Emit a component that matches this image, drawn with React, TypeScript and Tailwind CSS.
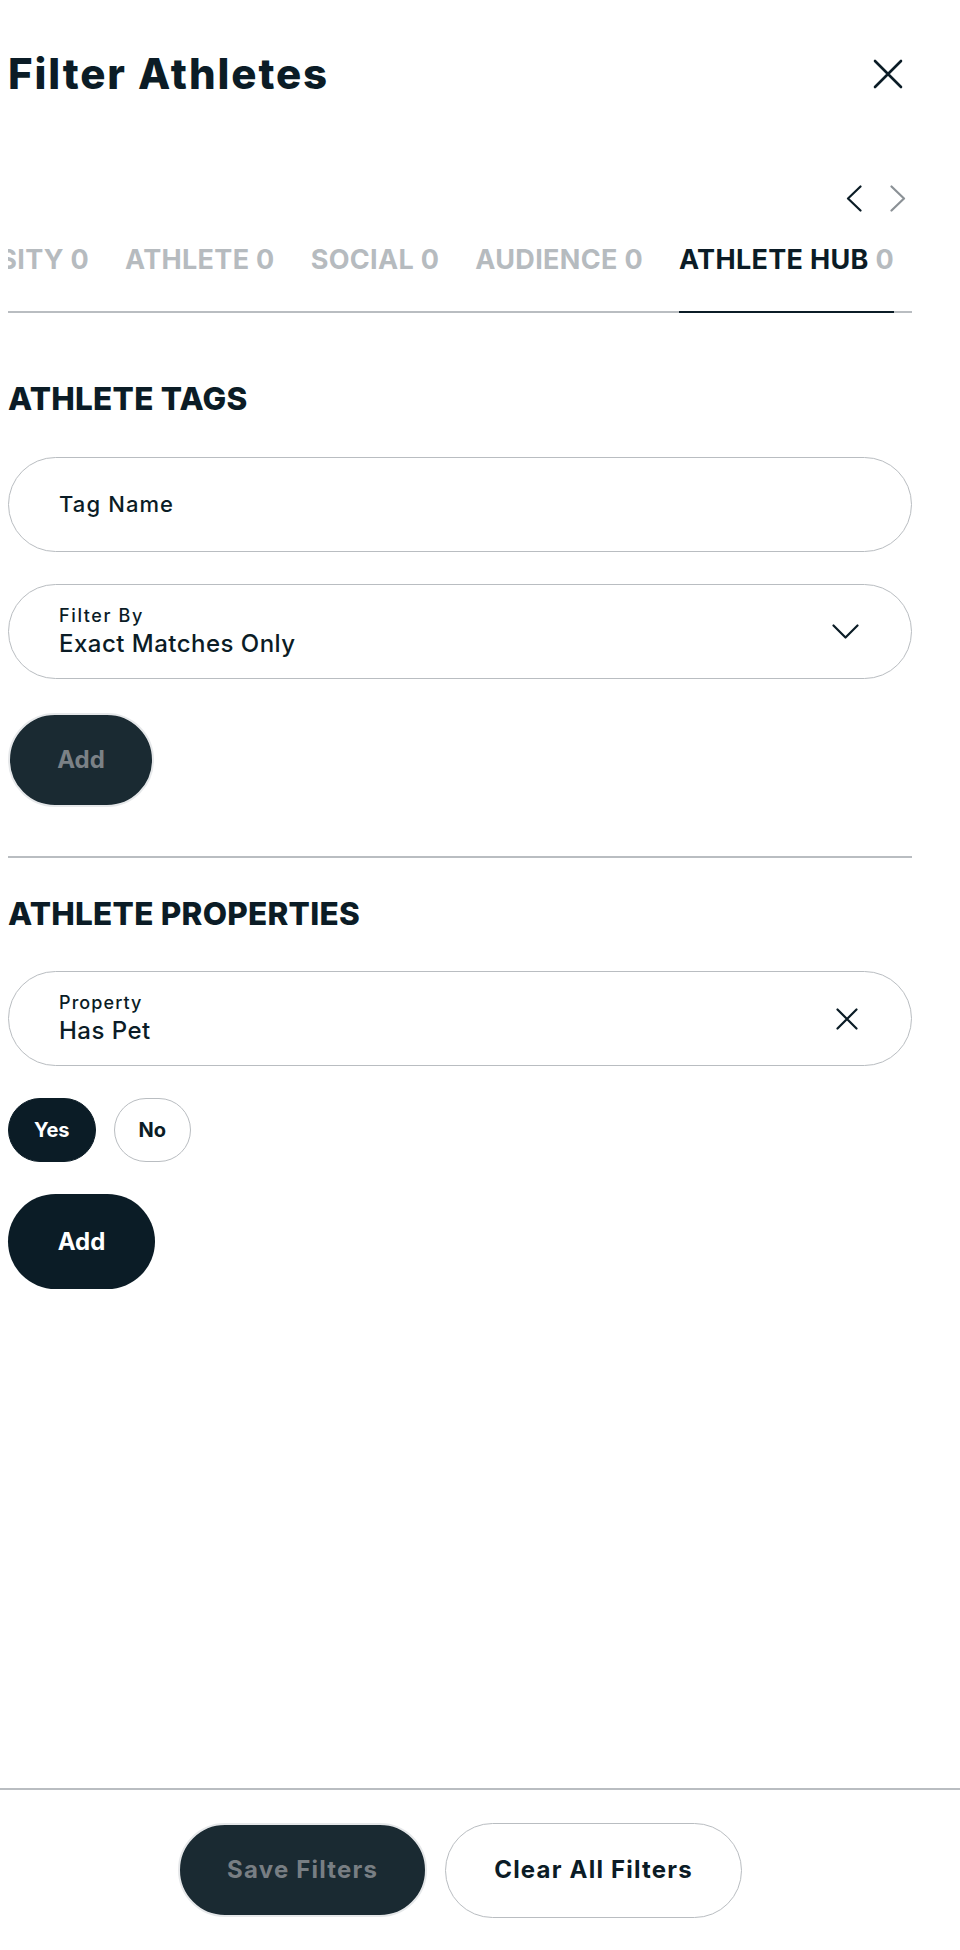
import React from "react";

const tabs = [
  { label: "UNIVERSITY", count: 0 },
  { label: "ATHLETE", count: 0 },
  { label: "SOCIAL", count: 0 },
  { label: "AUDIENCE", count: 0 },
  { label: "ATHLETE HUB", count: 0, active: true },
];

export default function App() {
  return (
    <div className="min-h-[1950px] flex flex-col bg-white font-['Inter',sans-serif] text-[#0b1c26]">
      <div className="flex-1 pl-[8px] w-[912px]">
        {/* Header */}
        <div className="h-[148px] flex items-center justify-between">
          <h1 className="text-[42px] leading-none font-extrabold tracking-[0.045em]">Filter Athletes</h1>
          <button className="mr-[9px] w-[30px] h-[30px]" aria-label="Close">
            <svg width="30" height="30" viewBox="0 0 30 30" fill="none" stroke="#0b1c26" strokeWidth="2.6" strokeLinecap="round">
              <path d="M2 2 L28 28 M28 2 L2 28" />
            </svg>
          </button>
        </div>

        {/* Tab arrows */}
        <div className="mt-[30px] h-[40px] flex justify-end items-center gap-[28px] pr-[6px]">
          <svg width="16" height="27" viewBox="0 0 16 27" fill="none" stroke="#0b1c26" strokeWidth="2.2" strokeLinecap="round" strokeLinejoin="round">
            <path d="M14.5 1.5 L2 13.5 L14.5 25.5" />
          </svg>
          <svg width="16" height="27" viewBox="0 0 16 27" fill="none" stroke="#8b9196" strokeWidth="2.2" strokeLinecap="round" strokeLinejoin="round">
            <path d="M1.5 1.5 L14 13.5 L1.5 25.5" />
          </svg>
        </div>

        {/* Tabs */}
        <div className="overflow-hidden flex justify-end gap-[36px] pr-[18px] shadow-[inset_0_-2px_0_#b9bdc1]">
          {tabs.map((t) => (
            <div
              key={t.label}
              className={
                "shrink-0 whitespace-nowrap pt-[28px] pb-[38px] text-[27px] leading-none font-bold tracking-[0.012em] border-b-2 " +
                (t.active ? "border-[#0b1c26] text-[#0b1c26]" : "border-transparent text-[#b6bbbf]")
              }
            >
              <span>{t.label}</span> <span className="text-[#b6bbbf]">{t.count}</span>
            </div>
          ))}
        </div>

        {/* Athlete Tags */}
        <h2 className="mt-[70px] text-[31.5px] leading-none font-extrabold tracking-[0.008em]">ATHLETE TAGS</h2>

        <div className="mt-[42px] h-[95px] rounded-full border-[1.5px] border-[#b9bdc1] flex items-center pl-[50px]">
          <span className="text-[22px] leading-none font-medium tracking-[0.05em]">Tag Name</span>
        </div>

        <div className="mt-[32px] h-[95px] rounded-full border-[1.5px] border-[#b9bdc1] flex items-center justify-between pl-[50px] pr-[52px]">
          <div className="flex flex-col">
            <span className="text-[18px] leading-none font-medium tracking-[0.09em]">Filter By</span>
            <span className="mt-[7px] text-[24px] leading-none font-medium tracking-[0.02em]">Exact Matches Only</span>
          </div>
          <svg width="27" height="15" viewBox="0 0 27 15" fill="none" stroke="#0b1c26" strokeWidth="2.2" strokeLinecap="round" strokeLinejoin="round">
            <path d="M1.5 1.5 L13.5 13.5 L25.5 1.5" />
          </svg>
        </div>

        <button className="mt-[34px] h-[94px] w-[146px] rounded-full bg-[#1a2a32] border-2 border-[#e6e8ea] text-[#7b8186] text-[24px] leading-none font-bold">
          Add
        </button>

        <div className="mt-[49px] h-[2px] bg-[#b9bdc1]" />

        {/* Athlete Properties */}
        <h2 className="mt-[40px] text-[31.5px] leading-none font-extrabold tracking-[0.008em]">ATHLETE PROPERTIES</h2>

        <div className="mt-[42px] h-[95px] rounded-full border-[1.5px] border-[#b9bdc1] flex items-center justify-between pl-[50px] pr-[53px]">
          <div className="flex flex-col">
            <span className="text-[18px] leading-none font-medium tracking-[0.06em]">Property</span>
            <span className="mt-[7px] text-[24px] leading-none font-medium tracking-[0.02em]">Has Pet</span>
          </div>
          <svg width="22" height="22" viewBox="0 0 22 22" fill="none" stroke="#0b1c26" strokeWidth="2.2" strokeLinecap="round">
            <path d="M1.5 1.5 L20.5 20.5 M20.5 1.5 L1.5 20.5" />
          </svg>
        </div>

        <div className="mt-[32px] flex gap-[18px]">
          <button className="h-[64px] px-[25px] rounded-full bg-[#0b1c26] border-[1.5px] border-[#0b1c26] text-white text-[20px] leading-none font-bold">
            Yes
          </button>
          <button className="h-[64px] px-[24px] rounded-full bg-white border-[1.5px] border-[#b9bdc1] text-[#0b1c26] text-[20px] leading-none font-bold">
            No
          </button>
        </div>

        <button className="mt-[32px] h-[95px] w-[147px] rounded-full bg-[#0b1c26] text-white text-[24px] leading-none font-bold">
          Add
        </button>
      </div>

      {/* Footer */}
      <div className="h-[162px] border-t-2 border-[#b9bdc1] flex items-center justify-center gap-[18px] pr-[40px]">
        <button className="h-[94px] px-[47px] rounded-full bg-[#1a2a32] border-2 border-[#e6e8ea] text-[#787e83] text-[24px] leading-none font-bold tracking-[0.05em]">
          Save Filters
        </button>
        <button className="h-[95px] px-[48px] rounded-full bg-white border-[1.5px] border-[#b9bdc1] text-[#0b1c26] text-[24px] leading-none font-bold tracking-[0.05em]">
          Clear All Filters
        </button>
      </div>
    </div>
  );
}
